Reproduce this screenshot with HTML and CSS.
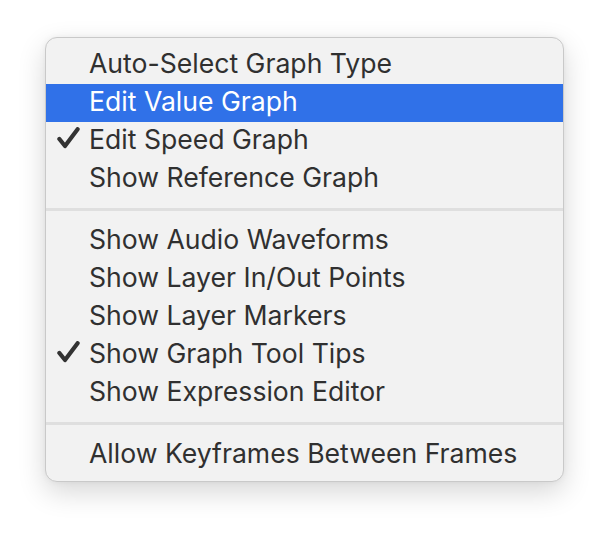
FILE: index.html
```html
<!DOCTYPE html>
<html>
<head>
<meta charset="utf-8">
<link rel="stylesheet" href="styles.css">
</head>
<body>
<div class="stage">
  <div class="menu">
    <div class="item">Auto-Select Graph Type</div>
    <div class="item selected">Edit Value Graph</div>
    <div class="item checked"><svg class="check" viewBox="0 0 23 22" width="23" height="22"><path d="M2.4 12.0 L8.0 19.0 L20.6 2.2" fill="none" stroke="#333" stroke-width="4.2" stroke-linecap="round" stroke-linejoin="round"/></svg>Edit Speed Graph</div>
    <div class="item">Show Reference Graph</div>
    <div class="sep"></div>
    <div class="item">Show Audio Waveforms</div>
    <div class="item">Show Layer In/Out Points</div>
    <div class="item">Show Layer Markers</div>
    <div class="item checked"><svg class="check" viewBox="0 0 23 22" width="23" height="22"><path d="M2.4 12.0 L8.0 19.0 L20.6 2.2" fill="none" stroke="#333" stroke-width="4.2" stroke-linecap="round" stroke-linejoin="round"/></svg>Show Graph Tool Tips</div>
    <div class="item">Show Expression Editor</div>
    <div class="sep"></div>
    <div class="item">Allow Keyframes Between Frames</div>
  </div>
</div>
</body>
</html>
```

FILE: styles.css
```css
html, body {
  margin: 0;
  padding: 0;
  background: #ffffff;
}
.stage {
  padding: 37px 0 0 45px;
  min-height: 536px;
  box-sizing: border-box;
}
.menu {
  width: 517px;
  box-sizing: content-box;
  background: #f2f2f2;
  border: 1px solid #c9c9c9;
  border-radius: 12px;
  padding: 8px 0 7px 0;
  box-shadow: 0 10px 28px rgba(0, 0, 0, 0.16), 0 0 6px rgba(0, 0, 0, 0.05);
  font-family: "Inter", "Liberation Sans", sans-serif;
  font-size: 26.6px;
  color: #303030;
  overflow: hidden;
}
.item {
  position: relative;
  height: 38px;
  box-sizing: border-box;
  line-height: 34px;
  padding-left: 43px;
  padding-bottom: 4px;
  white-space: nowrap;
}
.item.selected {
  background: #3071e8;
  color: #ffffff;
}
.check {
  position: absolute;
  left: 11px;
  top: 5px;
}
.sep {
  height: 3px;
  margin: 10px 0 11px 0;
  background: #dfdfdf;
}
```
